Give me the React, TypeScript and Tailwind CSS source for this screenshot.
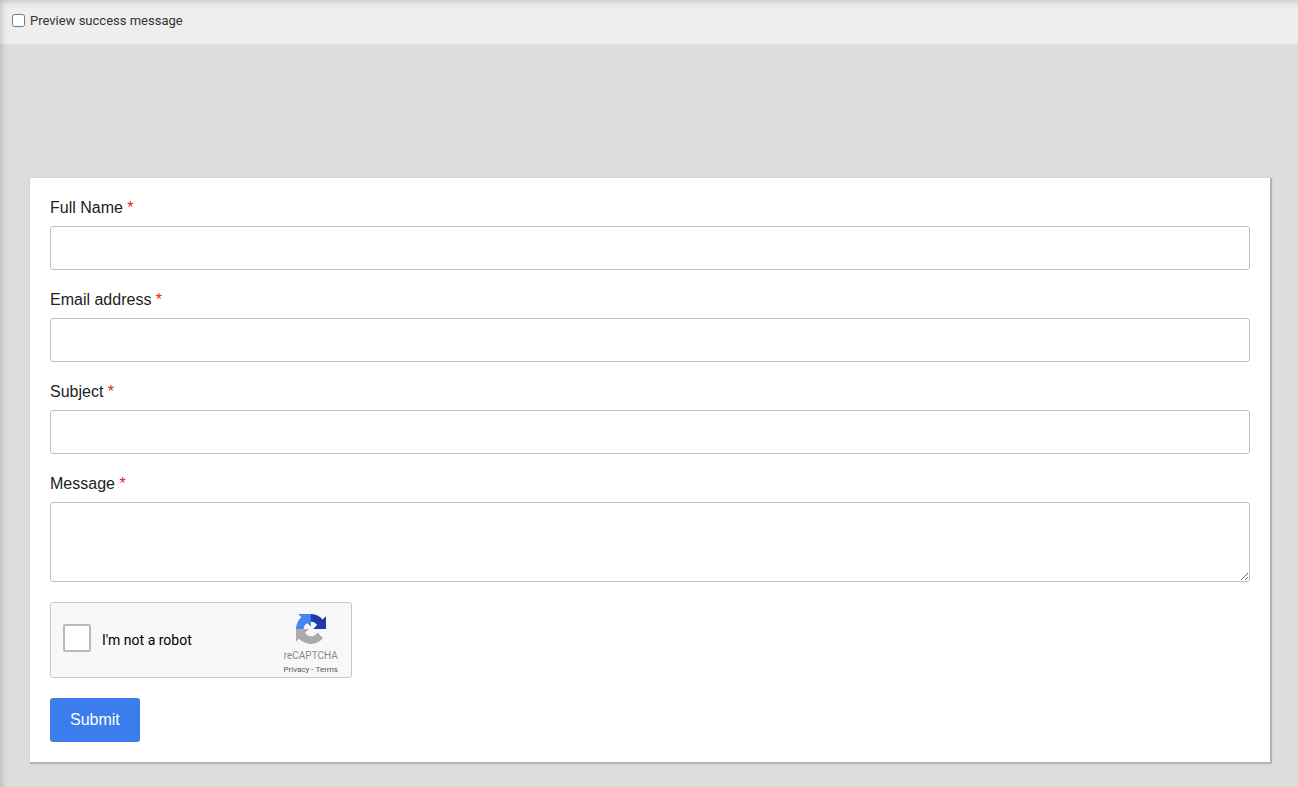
import { useState, type ComponentProps, type FormEvent } from "react";

const fieldClass =
  "block w-full rounded-[3px] border border-[#bfbfbf] bg-white px-3 text-base text-[#222] outline-none focus:border-[#3b7ded]";

const textFields = [
  { id: "name", label: "Full Name", type: "text" },
  { id: "email", label: "Email address", type: "email" },
  { id: "subject", label: "Subject", type: "text" },
];

function FieldLabel({ children, ...props }: ComponentProps<"label">) {
  return (
    <label className="mb-2 block text-base leading-5 text-[#222]" {...props}>
      {children} <span className="text-[#e01b1b]">*</span>
    </label>
  );
}

function RecaptchaLogo() {
  return (
    <svg viewBox="0 0 64 64" className="size-[30px]" aria-hidden="true">
      <path
        fill="#1c3aa9"
        d="M64 31.955l-.033-1.37V4.687l-7.16 7.16C50.948 4.674 42.033.093 32.05.093c-10.4 0-19.622 4.96-25.458 12.64l11.736 11.86a15.55 15.55 0 0 1 4.754-5.334c2.05-1.6 4.952-2.906 8.968-2.906.485 0 .86.057 1.135.163 4.976.393 9.288 3.14 11.828 7.124l-8.307 8.307L64 31.953"
      />
      <path
        fill="#4285f4"
        d="M31.862.094l-1.37.033H4.594l7.16 7.16C4.58 13.147 0 22.06 0 32.046c0 10.4 4.96 19.622 12.64 25.458L24.5 45.768a15.55 15.55 0 0 1-5.334-4.754c-1.6-2.05-2.906-4.952-2.906-8.968 0-.485.057-.86.163-1.135.393-4.976 3.14-9.288 7.124-11.828l8.307 8.307L31.86.095"
      />
      <path
        fill="#ababab"
        d="M.001 32.045l.033 1.37v25.898l7.16-7.16c5.86 7.173 14.774 11.754 24.76 11.754 10.4 0 19.622-4.96 25.458-12.64l-11.736-11.86a15.55 15.55 0 0 1-4.754 5.334c-2.05 1.6-4.952 2.906-8.968 2.906-.485 0-.86-.057-1.135-.163-4.976-.393-9.288-3.14-11.828-7.124l8.307-8.307c-10.522.04-22.4.066-27.295-.005"
      />
    </svg>
  );
}

function Recaptcha() {
  return (
    <div className="flex w-[302px] items-stretch justify-between rounded-[3px] border border-[#c9c9c9] bg-[#f8f8f8] pr-[13px] pl-3 font-[Roboto,sans-serif]">
      <div className="flex items-center gap-[11px] pb-1">
        <input
          id="robot"
          type="checkbox"
          className="size-7 appearance-none rounded-xs border-2 border-[#b9b9b9] bg-white checked:border-[#4285f4] checked:bg-[#4285f4]"
        />
        <label htmlFor="robot" className="pt-1 text-sm leading-4 text-black">
          I'm not a robot
        </label>
      </div>
      <div className="flex flex-col items-center pt-[11px] pb-px text-[#555]">
        <RecaptchaLogo />
        <span className="mt-1 text-[10px] leading-4 text-[#888]">reCAPTCHA</span>
        <span className="flex gap-[2px] text-[8px] leading-3">
          <a href="#privacy">Privacy</a>
          <span>-</span>
          <a href="#terms">Terms</a>
        </span>
      </div>
    </div>
  );
}

export default function App() {
  const [preview, setPreview] = useState(false);

  const handleSubmit = (e: FormEvent) => {
    e.preventDefault();
    setPreview(true);
  };

  return (
    <div className="relative min-h-screen bg-[#ddd] font-['Liberation_Sans',Arial,sans-serif]">
      <header className="flex h-11 items-center bg-[#eee] px-3 pb-[3px] font-[Roboto,sans-serif]">
        <input
          id="preview"
          type="checkbox"
          className="size-[13px]"
          checked={preview}
          onChange={(e) => setPreview(e.target.checked)}
        />
        <label htmlFor="preview" className="pl-[5px] text-[13px] leading-4 text-[#333]">
          Preview success message
        </label>
      </header>

      <main className="pt-[134px] pr-7 pb-6 pl-[30px]">
        <form
          onSubmit={handleSubmit}
          className="flex flex-col gap-5 bg-white p-5 shadow-[1px_1px_1px_1px_#b3b3b3]"
        >
          {preview ? (
            <p className="text-base text-[#222]">Thank you!</p>
          ) : (
            <>
              {textFields.map((field) => (
                <div key={field.id}>
                  <FieldLabel htmlFor={field.id}>{field.label}</FieldLabel>
                  <input id={field.id} name={field.id} type={field.type} className={`${fieldClass} h-11`} />
                </div>
              ))}
              <div>
                <FieldLabel htmlFor="message">Message</FieldLabel>
                <textarea id="message" name="message" className={`${fieldClass} h-20 resize-y py-2`} />
              </div>
              <Recaptcha />
              <button
                type="submit"
                className="h-11 cursor-pointer self-start rounded-[3px] bg-[#3b7ded] px-5 text-base text-white"
              >
                Submit
              </button>
            </>
          )}
        </form>
      </main>

      {/* inner shadow along the top and left edges of the frame */}
      <div className="pointer-events-none absolute inset-0 shadow-[inset_4px_4px_8px_-4px_rgba(0,0,0,0.25)]" />
    </div>
  );
}
